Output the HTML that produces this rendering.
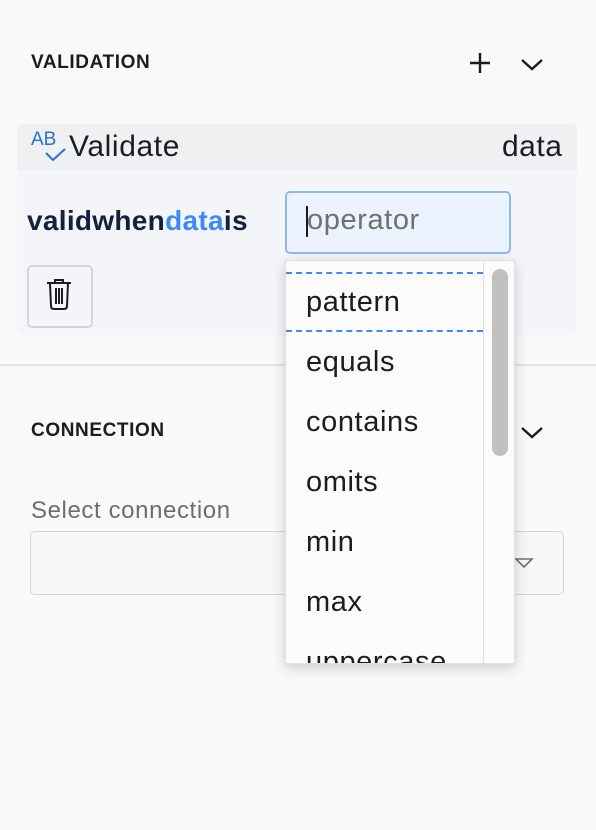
<!DOCTYPE html><html><head><style>
body{margin:0;width:596px;height:830px;background:#f8f9f9;font-family:"Liberation Sans",sans-serif;position:relative;overflow:hidden;color:#1a1c1f}
.a{position:absolute}
</style></head><body>
<div class="a" style="left:31px;top:52px;font-size:19px;font-weight:bold;letter-spacing:0.6px">VALIDATION</div>
<svg class="a" style="left:468px;top:51px" width="24" height="24"><path d="M12 2V22M2 12H22" stroke="#1a1c1f" stroke-width="2.4"/></svg>
<svg class="a" style="left:520px;top:54px" width="24" height="20"><path d="M2 6L12 15L22 6" stroke="#1a1c1f" stroke-width="2.4" fill="none"/></svg>
<div class="a" style="left:17px;top:124px;width:560px;height:46px;background:#eff0f2;border-radius:6px 6px 0 0"></div>
<div class="a" style="left:31px;top:129px;font-size:19px;color:#2a6fdb">AB</div>
<svg class="a" style="left:44px;top:147px" width="24" height="18"><path d="M2 6L9 13L21 2" stroke="#2a6fdb" stroke-width="2" fill="none"/></svg>
<div class="a" style="left:69px;top:130px;font-size:30px;letter-spacing:0.6px">Validate</div>
<div class="a" style="left:502px;top:130px;font-size:30px;letter-spacing:0.5px">data</div>
<div class="a" style="left:17px;top:170px;width:560px;height:165px;background:#f4f5f8;border-radius:0 0 6px 6px"></div>
<div class="a" style="left:27px;top:205px;font-size:28px;font-weight:bold;color:#14213d;letter-spacing:0.3px">validwhen<span style="color:#3d8af7">data</span>is</div>
<div class="a" style="left:285px;top:191px;width:222px;height:59px;background:#ebf3fe;border:2px solid #8fb8ee;border-radius:5px"></div>
<div class="a" style="left:306px;top:206px;width:2px;height:31px;background:#1a1c1f"></div>
<div class="a" style="left:307px;top:204px;font-size:29px;color:#707070;letter-spacing:0.6px">operator</div>
<div class="a" style="left:27px;top:265px;width:62px;height:59px;border:2px solid #d3d5d8;border-radius:5px"></div>
<svg class="a" style="left:45px;top:278px" width="28" height="34"><path d="M2 5H26M10 5V2H18V5M5 5L6 28Q6 31 9 31H19Q22 31 22 28L23 5M11 10V26M14 10V26M17 10V26" stroke="#1a1c1f" stroke-width="2" fill="none"/></svg>
<div class="a" style="left:0;top:364px;width:596px;height:2px;background:#e2e3e5"></div>
<div class="a" style="left:31px;top:420px;font-size:19px;font-weight:bold;letter-spacing:0.6px">CONNECTION</div>
<svg class="a" style="left:520px;top:422px" width="24" height="20"><path d="M2 6L12 15L22 6" stroke="#1a1c1f" stroke-width="2.4" fill="none"/></svg>
<div class="a" style="left:31px;top:497px;font-size:24px;color:#6b6e73;letter-spacing:0.6px">Select connection</div>
<div class="a" style="left:30px;top:531px;width:532px;height:62px;border:1px solid #d3d5d8;border-radius:5px;background:#f6f7f8"></div>
<svg class="a" style="left:514px;top:557px" width="20" height="12"><path d="M2 2H18L10 10Z" stroke="#707070" stroke-width="1.6" fill="none"/></svg>
<div class="a" style="left:285px;top:260px;width:228px;height:402px;background:#fbfbfb;border:1px solid #e0e0e0;box-shadow:0 4px 12px rgba(0,0,0,0.18);overflow:hidden">
<div class="a" style="left:197px;top:0;width:1px;height:402px;background:#e0e0e0"></div>
<div class="a" style="left:206px;top:8px;width:16px;height:187px;background:#c0c0c0;border-radius:8px"></div>
<div class="a" style="left:0;top:11px;width:197px;border-top:2px dashed #3d8af7"></div>
<div class="a" style="left:0;top:69px;width:197px;border-top:2px dashed #3d8af7"></div>
<div style="position:absolute;left:20px;top:11px;font-size:29px;line-height:60px;letter-spacing:0.6px">pattern<br>equals<br>contains<br>omits<br>min<br>max<br>uppercase</div>
</div>
</body></html>
